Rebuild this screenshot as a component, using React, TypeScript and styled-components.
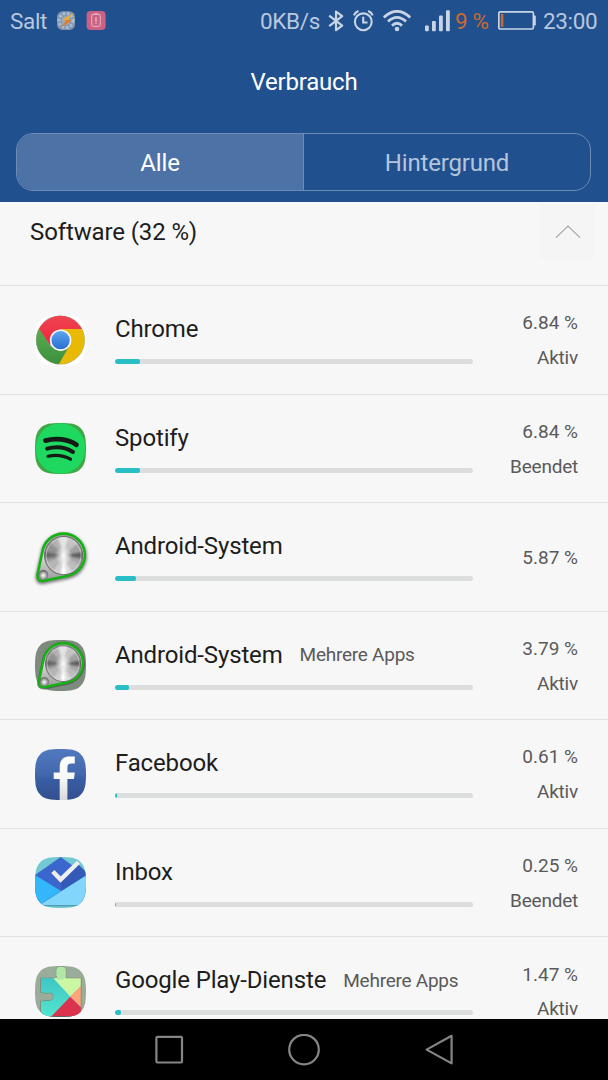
import type { ReactNode } from "react";
import styled, { createGlobalStyle } from "styled-components";

const SQUIRCLE =
  "M25.5 0C36 0 41 .9 44.7 4.2C49.6 8.6 51 14 51 25.5C51 37 49.6 42.4 44.7 46.8C41 50.1 36 51 25.5 51C15 51 10 50.1 6.3 46.8C1.4 42.4 0 37 0 25.5C0 14 1.4 8.6 6.3 4.2C10 .9 15 0 25.5 0Z";

const ChromeIcon = () => (
  <AppIcon viewBox="0 0 51 51">
    <defs>
      <clipPath id="chromeClip">
        <circle cx="25.4" cy="25" r="24.2" />
      </clipPath>
      <linearGradient id="chromeRed" x1="0" y1="0" x2="0" y2="1">
        <stop offset="0" stopColor="#ee4550" />
        <stop offset="1" stopColor="#f0243f" />
      </linearGradient>
      <linearGradient id="chromeGreen" x1="0" y1="0" x2="0" y2="1">
        <stop offset="0" stopColor="#5bab50" />
        <stop offset="1" stopColor="#3a8f3e" />
      </linearGradient>
      <linearGradient id="chromeBlue" x1="0" y1="0" x2="0" y2="1">
        <stop offset="0" stopColor="#5ba3ee" />
        <stop offset="1" stopColor="#2a6fd0" />
      </linearGradient>
    </defs>
    <path d={SQUIRCLE} fill="#fff" />
    <circle cx="25.4" cy="25" r="24.5" fill="#a9a58f" />
    <g clipPath="url(#chromeClip)">
      <path d="M0 0H51V14.2H25L15 30L3.5 14Z" fill="url(#chromeRed)" />
      <path d="M25 14H51V51H22.5L35 30Z" fill="#e8ba04" />
      <path d="M4 13.5L15.3 31L25 36L34 31.5L22.8 51H0V13Z" fill="url(#chromeGreen)" />
    </g>
    <circle cx="25.6" cy="25.2" r="10.8" fill="#f4f4f4" />
    <circle cx="25.6" cy="25.2" r="9.1" fill="url(#chromeBlue)" />
  </AppIcon>
);

const SpotifyIcon = () => (
  <AppIcon viewBox="0 0 51 51">
    <path d={SQUIRCLE} fill="#3ea845" />
    <ellipse cx="25.5" cy="25.5" rx="24.8" ry="25.3" fill="#1fd860" />
    <g fill="none" stroke="#141a14" strokeLinecap="round">
      <path d="M10.6 17.6C20 14.8 33 15.8 41.4 21.7" strokeWidth="4.9" />
      <path d="M12.2 25.7C20.5 23.3 30.5 24.3 38 29" strokeWidth="4" />
      <path d="M13 33.2C20.5 31.6 28.5 32.2 35.5 36.2" strokeWidth="3.2" />
    </g>
  </AppIcon>
);

const DROP =
  "M7.4 20A21.3 21.3 0 1 1 34 43.5L9 48.7C4 49.5 1.8 47 2.5 42.5Z";

// Brushed metal dial: light and dark wedges [start, end, colour] round the centre.
const WEDGES: [number, number, string][] = [
  [-12, 10, "#5e5e5e"],
  [10, 30, "#a8a8a8"],
  [30, 62, "#bdbdbd"],
  [62, 80, "#dedede"],
  [80, 100, "#fff"],
  [100, 125, "#d0d0d0"],
  [125, 160, "#b5b5b5"],
  [160, 172, "#9a9a9a"],
  [172, 192, "#666"],
  [192, 225, "#939393"],
  [225, 252, "#b2b2b2"],
  [252, 286, "#e4e4e4"],
  [286, 320, "#c4c4c4"],
  [320, 348, "#a2a2a2"],
];

const wedgePoint = (deg: number) => {
  const a = (deg * Math.PI) / 180;
  return `${28.6 + Math.cos(a) * 26} ${23.6 + Math.sin(a) * 26}`;
};

const Dial = ({ id }: { id: string }) => (
  <g>
    <defs>
      <clipPath id={`${id}Clip`}>
        <circle cx="28.6" cy="23.6" r="18.6" />
      </clipPath>
      <filter id={`${id}Soft`}>
        <feGaussianBlur stdDeviation="1.3" />
      </filter>
      <linearGradient id={`${id}Body`} x1="0" y1="0" x2="0" y2="1">
        <stop offset="0" stopColor="#999" />
        <stop offset="0.45" stopColor="#ddd" />
        <stop offset="1" stopColor="#999" />
      </linearGradient>
      <radialGradient id={`${id}Ball`} cx="0.5" cy="0.55" r="0.6">
        <stop offset="0" stopColor="#fff" />
        <stop offset="0.5" stopColor="#aaa" />
        <stop offset="1" stopColor="#444" />
      </radialGradient>
      <radialGradient id={`${id}Glow`}>
        <stop offset="0" stopColor="#fff" />
        <stop offset="1" stopColor="#fff" stopOpacity="0" />
      </radialGradient>
    </defs>
    <path d={DROP} fill={`url(#${id}Body)`} stroke="#12b412" strokeWidth="2.6" />
    <circle cx="28.6" cy="23.6" r="19.6" fill="#6e6e6e" />
    <g clipPath={`url(#${id}Clip)`}>
      <g filter={`url(#${id}Soft)`}>
        {WEDGES.map(([from, to, color]) => (
          <path
            key={from}
            d={`M28.6 23.6L${wedgePoint(from)}L${wedgePoint(to)}Z`}
            fill={color}
          />
        ))}
      </g>
      <circle cx="28.6" cy="23.6" r="9" fill={`url(#${id}Glow)`} />
    </g>
    <circle cx="28.6" cy="23.6" r="17.4" fill="none" stroke="#ddd" strokeWidth="0.8" opacity="0.7" />
    <circle cx="8.3" cy="43" r="4.9" fill={`url(#${id}Ball)`} />
  </g>
);

const SystemIcon = () => (
  <AppIcon viewBox="0 0 51 51">
    <defs>
      <filter id="dropSoft" x="-20%" y="-20%" width="140%" height="140%">
        <feGaussianBlur stdDeviation="1.5" />
      </filter>
    </defs>
    <path
      d={DROP}
      transform="translate(.1 1.4)"
      fill="#555"
      stroke="#555"
      strokeWidth="4"
      opacity="0.75"
      filter="url(#dropSoft)"
    />
    <Dial id="dialA" />
  </AppIcon>
);

const SystemBoxIcon = () => (
  <AppIcon viewBox="0 0 51 51">
    <path d={SQUIRCLE} fill="#7d8a7d" />
    <path
      d={DROP}
      transform="translate(1.8 2.2) scale(.93)"
      stroke="#4a564a"
      strokeWidth="4"
      opacity="0.7"
    />
    <g transform="translate(1.6 1.7) scale(.93)">
      <Dial id="dialB" />
    </g>
  </AppIcon>
);

const FacebookIcon = () => (
  <AppIcon viewBox="0 0 51 51">
    <defs>
      <linearGradient id="fbBlue" x1="0" y1="0" x2="0" y2="1">
        <stop offset="0" stopColor="#5279bd" />
        <stop offset="0.5" stopColor="#4267ad" />
        <stop offset="0.6" stopColor="#395da3" />
        <stop offset="1" stopColor="#31508f" />
      </linearGradient>
      <linearGradient id="fbWhite" x1="0" y1="7" x2="0" y2="51" gradientUnits="userSpaceOnUse">
        <stop offset="0" stopColor="#fff" />
        <stop offset="0.55" stopColor="#f6f6f6" />
        <stop offset="1" stopColor="#d8d8da" />
      </linearGradient>
    </defs>
    <path d={SQUIRCLE} fill="url(#fbBlue)" />
    <path
      d="M24.7 51V30H18.7V23.4H24.7V18C24.7 11 28.5 7.6 34.5 7.6H39.8V14.6H36.2C33.3 14.6 32.4 16 32.4 18.6V23.4H39.8L39 30H32.4V51Z"
      fill="url(#fbWhite)"
    />
  </AppIcon>
);

const InboxIcon = () => (
  <AppIcon viewBox="0 0 51 51">
    <defs>
      <clipPath id="inboxClip">
        <path d={SQUIRCLE} />
      </clipPath>
    </defs>
    <g clipPath="url(#inboxClip)">
      <path d="M0 0H51V51H0Z" fill="#72c8d3" />
      <path d="M0 48H51V49.3H0Z" fill="#4a9fab" />
      <path d="M0 18L25.7 0L51 18.5V48H0Z" fill="#3b66cd" />
      <path d="M25.3 23.5L43 7L51 15V19L27 34Z" fill="#345ab8" />
      <path d="M0 18L26 34L4 48H0Z" fill="#33b7f8" />
      <path d="M51 18.5V48H4.5Z" fill="#82d5fb" />
    </g>
    <path d="M17.8 14.5L25.6 22.6L43.4 5.2" fill="none" stroke="#eee" strokeWidth="4.4" />
  </AppIcon>
);

const PIECE =
  "M6 12.3H20.5Q22.7 12 21.6 9.5V4Q21.6 .8 26 .8Q30.6 .8 30.6 4V9.5Q29.6 12 32 12.3H45.8V49L41 50H10L6 46V35.5H8.8Q10.5 34.3 13 34.9Q18.6 35.2 18.6 30.8Q18.6 26.3 13 26.5Q10.5 27.6 8.8 26.2H6Z";

const PlayServicesIcon = () => (
  <AppIcon viewBox="0 0 51 51">
    <defs>
      <clipPath id="playBox">
        <path d={SQUIRCLE} />
      </clipPath>
      <clipPath id="playPiece">
        <path d={PIECE} />
      </clipPath>
      <linearGradient id="playTeal" x1="0" y1="0" x2="0" y2="1">
        <stop offset="0" stopColor="#3fc6c4" />
        <stop offset="1" stopColor="#52e5cf" />
      </linearGradient>
    </defs>
    <path d={SQUIRCLE} fill="#9aac9a" />
    <g clipPath="url(#playBox)">
      <path d={PIECE} fill="none" stroke="#71816f" strokeWidth="1.3" />
      <path d="M12 50H40V51H12Z" fill="#5c675b" />
      <g clipPath="url(#playPiece)">
        <path d="M0 0H20L35.4 30.7L17 50H0Z" fill="url(#playTeal)" />
        <path d="M0 12H19L35.4 30.7L16 50H0Z" fill="url(#playTeal)" />
        <path d="M18.4 12.3L20 0H51V15L35.4 30.7Z" fill="#cbf7a5" />
        <path d="M21 0H31V12L26 14L19 12Z" fill="#b3e6a6" />
        <path d="M46 19.8V41.5L35.2 30.7Z" fill="#fda47b" />
        <path d="M35.2 30.7L46 41.5V51H15.8Z" fill="#da334d" />
      </g>
    </g>
  </AppIcon>
);

type Usage = {
  name: string;
  icon: ReactNode;
  note?: string;
  percent: string;
  state?: string;
  fill: number;
};

const usages: Usage[] = [
  { name: "Chrome", icon: <ChromeIcon />, percent: "6.84 %", state: "Aktiv", fill: 24.7 },
  { name: "Spotify", icon: <SpotifyIcon />, percent: "6.84 %", state: "Beendet", fill: 24.7 },
  { name: "Android-System", icon: <SystemIcon />, percent: "5.87 %", fill: 21.3 },
  {
    name: "Android-System",
    icon: <SystemBoxIcon />,
    note: "Mehrere Apps",
    percent: "3.79 %",
    state: "Aktiv",
    fill: 14,
  },
  { name: "Facebook", icon: <FacebookIcon />, percent: "0.61 %", state: "Aktiv", fill: 2.2 },
  { name: "Inbox", icon: <InboxIcon />, percent: "0.25 %", state: "Beendet", fill: 1 },
  {
    name: "Google Play-Dienste",
    icon: <PlayServicesIcon />,
    note: "Mehrere Apps",
    percent: "1.47 %",
    state: "Aktiv",
    fill: 6,
  },
];

const StatusIcons = () => (
  <>
    <StatusSvg $w={16} $left={9} viewBox="0 0 16 22">
      <path
        d="M1.2 5.6L14.2 15.6L8 20.2V1.6L14.2 6.2L1.2 16.2"
        fill="none"
        stroke="#c9d5e6"
        strokeWidth="2.2"
        strokeLinejoin="round"
      />
    </StatusSvg>
    <StatusSvg $w={21} $left={9} viewBox="0 0 21 22">
      <g fill="none" stroke="#c9d5e6" strokeWidth="2.1">
        <circle cx="10.3" cy="11.8" r="8.4" />
        <path d="M10.2 6.8V12.5H14.5M.9 5.3Q2.2 2.3 5.5 1.1M19.7 5.3Q18.4 2.3 15.1 1.1" />
      </g>
    </StatusSvg>
    <StatusSvg $w={28} $left={9} viewBox="0 0 28 22">
      <g fill="none" stroke="#c9d5e6" strokeWidth="2.8">
        <path d="M.8 7.4Q14 -4.6 27.2 7.4" />
        <path d="M5 11.6Q14 3.2 23 11.6" />
        <path d="M9 15.6Q14 11 19 15.6" />
      </g>
      <circle cx="14" cy="19" r="2.3" fill="#c9d5e6" />
    </StatusSvg>
    <StatusSvg $w={25} $left={14} viewBox="0 0 25 22">
      <g fill="#c9d5e6">
        <rect x="0" y="15.5" width="3.8" height="5.8" rx="1" />
        <rect x="7" y="11" width="3.8" height="10.3" rx="1" />
        <rect x="14" y="5.4" width="3.8" height="15.9" rx="1" />
        <rect x="21" y="0.2" width="3.8" height="21.1" rx="1" />
      </g>
    </StatusSvg>
  </>
);

const App = () => {
  return (
    <Screen>
      <GlobalStyle />
      <Header>
        <StatusBar>
          <StatusText $w={37}>Salt</StatusText>
          <StatusSvg $w={19} $left={10} viewBox="0 0 19 22">
            <rect x="0" y="1.3" width="18" height="18.6" rx="5.5" fill="#8396a8" />
            <circle cx="9" cy="10.5" r="7" fill="none" stroke="#a5bedc" strokeWidth="3" strokeDasharray="2.6 1.6" />
            <circle cx="9" cy="10.5" r="4.5" fill="#9fabb0" />
            <path d="M16.8 2.6L6 9.6L9 11.2L4 17.4L14.5 10.6L11.4 9.2Z" fill="#ecac36" />
            <path d="M9 11.2L4 17.4L14.5 10.6L12.6 9.8L7.5 10.4Z" fill="#df7734" />
          </StatusSvg>
          <StatusSvg $w={20} $left={10} viewBox="0 0 20 22">
            <rect x="0.6" y="1" width="19" height="19" rx="4" fill="#cb6283" />
            <g fill="none" stroke="#e3a9bb" strokeWidth="1.1">
              <rect x="5.7" y="4.4" width="8.6" height="12" rx="1.6" />
              <path d="M8 3.7H12" />
              <path d="M10 7.2V11.8M10 12.7V14" strokeWidth="1.7" />
            </g>
          </StatusSvg>
          <Spacer />
          <StatusText $w={59}>0KB/s</StatusText>
          <StatusIcons />
          <StatusText $w={36} $left={5} $warn>
            9 %
          </StatusText>
          <StatusSvg $w={38} $left={7} viewBox="0 0 38 22">
            <rect x="0.8" y="1.8" width="34.6" height="17.2" rx="1.5" fill="none" stroke="#c9d5e6" strokeWidth="1.7" />
            <rect x="35.6" y="5.6" width="2.2" height="10" rx="0.6" fill="#c9d5e6" />
            <rect x="2.8" y="3.9" width="2.6" height="13" fill="#c8692f" />
          </StatusSvg>
          <StatusText $w={54} $left={7}>
            23:00
          </StatusText>
        </StatusBar>
        <Title>Verbrauch</Title>
        <Tabs>
          <Tab $active>Alle</Tab>
          <Tab>Hintergrund</Tab>
        </Tabs>
      </Header>

      <List>
        <SectionHead>
          <SectionTitle>Software (32 %)</SectionTitle>
          <CollapseBtn aria-label="Software">
            <svg width="26" height="14" viewBox="0 0 26 14">
              <path d="M1 12.7L13 1L25 12.7" fill="none" stroke="#a3a3a3" strokeWidth="1.1" />
            </svg>
          </CollapseBtn>
        </SectionHead>
        {usages.map((usage, i) => (
          <Row key={i}>
            {usage.icon}
            <Detail>
              <NameLine>
                <Name>{usage.name}</Name>
                {usage.note && <Note>{usage.note}</Note>}
              </NameLine>
              <Track>
                <Bar style={{ width: usage.fill }} />
              </Track>
            </Detail>
            <Values>
              <span>{usage.percent}</span>
              {usage.state && <State>{usage.state}</State>}
            </Values>
          </Row>
        ))}
      </List>

      <NavBar>
        <NavBtn aria-label="Recent">
          <svg width="32" height="32" viewBox="0 0 32 32">
            <rect x="3.4" y="2.9" width="25.6" height="25.6" rx="1" />
          </svg>
        </NavBtn>
        <NavBtn aria-label="Home">
          <svg width="32" height="32" viewBox="0 0 32 32">
            <circle cx="16" cy="15.6" r="14.8" />
          </svg>
        </NavBtn>
        <NavBtn aria-label="Back">
          <svg width="32" height="32" viewBox="0 0 32 32">
            <path d="M28.6 1.8V29.4L3.6 15.6Z" />
          </svg>
        </NavBtn>
      </NavBar>
    </Screen>
  );
};

const GlobalStyle = createGlobalStyle`
  body {
    margin: 0;
    background: #f7f7f7;
    font-family: Roboto, "Liberation Sans", sans-serif;
  }

  * {
    box-sizing: border-box;
  }

  button {
    padding: 0;
    border: 0;
    background: none;
    font: inherit;
  }
`;

const Screen = styled.div`
  display: flex;
  flex-direction: column;
  width: 608px;
  height: 1080px;
  overflow: hidden;
  background: #f7f7f7;
`;

const Header = styled.header`
  flex: none;
  height: 202px;
  background: #20508e;
`;

const StatusBar = styled.div`
  display: flex;
  align-items: center;
  height: 42px;
  padding: 0 11px 0 10px;
`;

const StatusText = styled.span<{ $w: number; $left?: number; $warn?: boolean }>`
  flex: none;
  width: ${(props) => props.$w}px;
  margin-left: ${(props) => props.$left ?? 0}px;
  color: ${(props) => (props.$warn ? "#cb6a2d" : "#b9c8dd")};
  font-size: 22.5px;
  line-height: 43px;
  letter-spacing: -0.35px;
  white-space: nowrap;
`;

const StatusSvg = styled.svg<{ $w: number; $left: number }>`
  flex: none;
  width: ${(props) => props.$w}px;
  height: 22px;
  margin-left: ${(props) => props.$left}px;
`;

const Spacer = styled.div`
  flex: 1;
`;

const Title = styled.h1`
  margin: 0;
  padding-top: 2px;
  height: 91px;
  color: #fff;
  font-size: 24px;
  font-weight: 400;
  line-height: 76px;
  letter-spacing: -0.2px;
  text-align: center;
`;

const Tabs = styled.div`
  display: flex;
  width: 575px;
  height: 58px;
  margin-left: 16px;
  overflow: hidden;
  border: 1px solid #6c8bb6;
  border-radius: 17px;
`;

const Tab = styled.button<{ $active?: boolean }>`
  flex: 1;
  padding-top: 1px;
  color: ${(props) => (props.$active ? "#fff" : "#b5c5dc")};
  background: ${(props) => (props.$active ? "#4d73a6" : "transparent")};
  font-size: 24px;
  letter-spacing: -0.17px;

  & + & {
    border-left: 1px solid #6c8bb6;
  }
`;

const List = styled.main`
  flex: 1;
  min-height: 0;
  overflow: hidden;
`;

const SectionHead = styled.div`
  display: flex;
  justify-content: space-between;
  height: 84px;
  padding: 2px 13px 0 30px;
  border-bottom: 1px solid #e1e1e1;
`;

const SectionTitle = styled.h2`
  margin: 0;
  color: #1d1d1d;
  font-size: 24px;
  font-weight: 400;
  line-height: 56px;
  letter-spacing: -0.12px;
`;

const CollapseBtn = styled.button`
  display: flex;
  align-items: center;
  justify-content: center;
  width: 55px;
  height: 55px;
  background: #f5f5f5;
`;

const Row = styled.div`
  display: flex;
  height: 108.55px;
  padding: 0 30px 0 35px;
  border-bottom: 1px solid #e1e1e1;
`;

const AppIcon = styled.svg`
  flex: none;
  width: 51px;
  height: 51px;
  margin-top: 28.6px;
  overflow: visible;
`;

const Detail = styled.div`
  flex: none;
  width: 358px;
  margin-left: 29px;
  padding-top: 28px;
`;

const NameLine = styled.div`
  display: flex;
  align-items: center;
  height: 30px;
  margin-bottom: 15px;
  white-space: nowrap;
`;

const Name = styled.span`
  color: #1d1d1d;
  font-size: 24px;
  letter-spacing: -0.15px;
`;

const Note = styled.span`
  margin-left: 17px;
  color: #5a5a5a;
  font-size: 19px;
  letter-spacing: -0.25px;
`;

const Track = styled.div`
  height: 5px;
  overflow: hidden;
  border-radius: 2.5px;
  background: #dcdedd;
`;

const Bar = styled.div`
  height: 5px;
  border-radius: 2px;
  background: #26bfc7;
`;

const Values = styled.div`
  display: flex;
  flex: 1;
  flex-direction: column;
  align-items: flex-end;
  justify-content: center;
  padding-top: 2.6px;
  color: #5a5a5a;
  font-size: 19px;
  line-height: 34.8px;
`;

const State = styled.span`
  letter-spacing: -0.22px;
`;

const NavBar = styled.nav`
  display: flex;
  flex: none;
  align-items: center;
  justify-content: center;
  gap: 103px;
  height: 61px;
  background: #000;
`;

const NavBtn = styled.button`
  display: flex;

  svg {
    fill: none;
    stroke: #858585;
    stroke-width: 2.2;
    stroke-linejoin: round;
  }
`;

export default App;
